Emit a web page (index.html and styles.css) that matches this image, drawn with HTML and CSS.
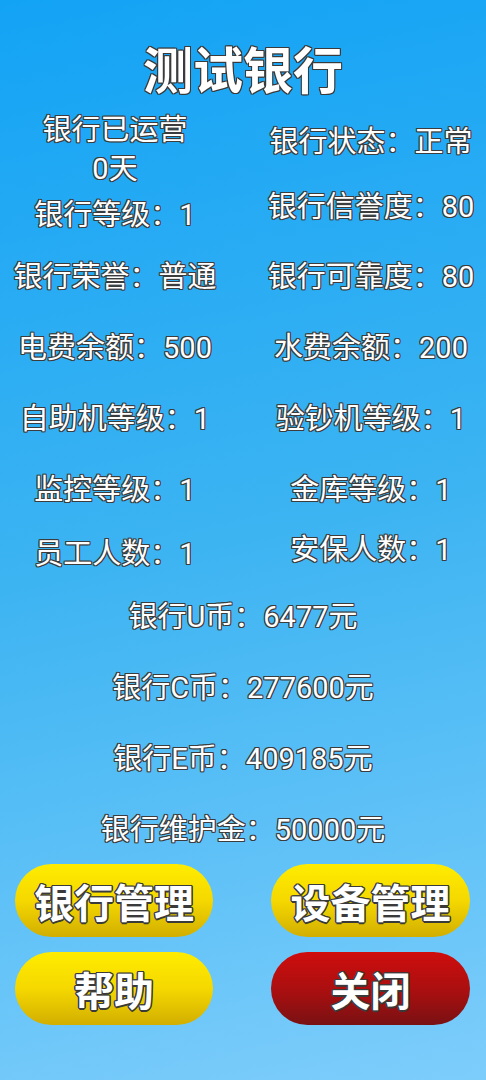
FILE: index.html
```html
<!DOCTYPE html>
<html lang="zh">
<head>
<meta charset="utf-8">
<title>测试银行</title>
<link rel="stylesheet" href="styles.css">
</head>
<body>
<div class="screen">
  <h1 class="title">测试银行</h1>
  <div class="stats">
    <div class="cell two">银行已运营<br>0天</div>
    <div class="cell r1">银行状态：正常</div>
    <div class="cell l2">银行等级：1</div>
    <div class="cell">银行信誉度：80</div>
    <div class="cell">银行荣誉：普通</div>
    <div class="cell">银行可靠度：80</div>
    <div class="cell">电费余额：500</div>
    <div class="cell">水费余额：200</div>
    <div class="cell">自助机等级：1</div>
    <div class="cell">验钞机等级：1</div>
    <div class="cell">监控等级：1</div>
    <div class="cell">金库等级：1</div>
    <div class="cell l7">员工人数：1</div>
    <div class="cell">安保人数：1</div>
  </div>
  <div class="money">
    <div class="line">银行U币：6477元</div>
    <div class="line">银行C币：277600元</div>
    <div class="line">银行E币：409185元</div>
    <div class="line">银行维护金：50000元</div>
  </div>
  <div class="buttons">
    <div class="btn yellow">银行管理</div>
    <div class="btn yellow">设备管理</div>
    <div class="btn yellow">帮助</div>
    <div class="btn red">关闭</div>
  </div>
</div>
</body>
</html>
```
FILE: styles.css
```css
html, body {
  margin: 0;
  padding: 0;
}
body {
  width: 486px;
  height: 1080px;
  overflow: hidden;
  background: linear-gradient(168deg, #13a3f5 0%, #3db4f2 50%, #7dcdfb 100%);
  font-family: "Noto Sans CJK SC", "Noto Sans", sans-serif;
  color: #ffffff;
}
.screen {
  display: flex;
  flex-direction: column;
  height: 1080px;
}
.title {
  margin: 0;
  padding-top: 35px;
  font-size: 50px;
  line-height: 64px;
  font-weight: 700;
  text-align: center;
  text-shadow: 1px 0 0 #3a3a3a, -1px 0 0 #3a3a3a, 0 1px 0 #3a3a3a, 0 -1px 0 #3a3a3a,
    1px 1px 0 #3a3a3a, -1px -1px 0 #3a3a3a, 1px -1px 0 #3a3a3a, -1px 1px 0 #3a3a3a;
}
.stats {
  margin-top: 12px;
  display: grid;
  grid-template-columns: 230px 230px;
  column-gap: 26px;
  grid-template-rows: 77px 70px 71px 71px 71px 60px 67px;
  align-items: start;
}
.cell, .line {
  font-family: "Roboto", "Noto Sans CJK SC", sans-serif;
  font-size: 29px;
  line-height: 39px;
  font-weight: 400;
  text-align: center;
  white-space: nowrap;
  text-shadow: 1px 0 0 #3c3c3c, -1px 0 0 #3c3c3c, 0 1px 0 #3c3c3c, 0 -1px 0 #3c3c3c,
    1px 1px 0 #3c3c3c, -1px -1px 0 #3c3c3c, 1px -1px 0 #3c3c3c, -1px 1px 0 #3c3c3c;
}
.r1 { padding-top: 12px; }
.l2 { padding-top: 8px; }
.l7 { padding-top: 4px; }
.money {
  display: flex;
  flex-direction: column;
  gap: 32px;
}
.buttons {
  margin-top: 14px;
  padding-left: 15px;
  display: grid;
  grid-template-columns: 198px 199px;
  column-gap: 58px;
  grid-auto-rows: 73px;
  row-gap: 15px;
}
.btn {
  border-radius: 37px;
  display: flex;
  align-items: center;
  justify-content: center;
  font-size: 40px;
  font-weight: 700;
  text-shadow: 1.5px 0 0 #3a3a3a, -1.5px 0 0 #3a3a3a, 0 1.5px 0 #3a3a3a, 0 -1.5px 0 #3a3a3a,
    1px 1px 0 #3a3a3a, -1px -1px 0 #3a3a3a, 1px -1px 0 #3a3a3a, -1px 1px 0 #3a3a3a;
}
.yellow {
  background: linear-gradient(180deg, #ffec00 0%, #f5d800 50%, #d2ae00 100%);
}
.red {
  background: linear-gradient(180deg, #cf0d0d 0%, #a80f10 55%, #791113 100%);
}
```
